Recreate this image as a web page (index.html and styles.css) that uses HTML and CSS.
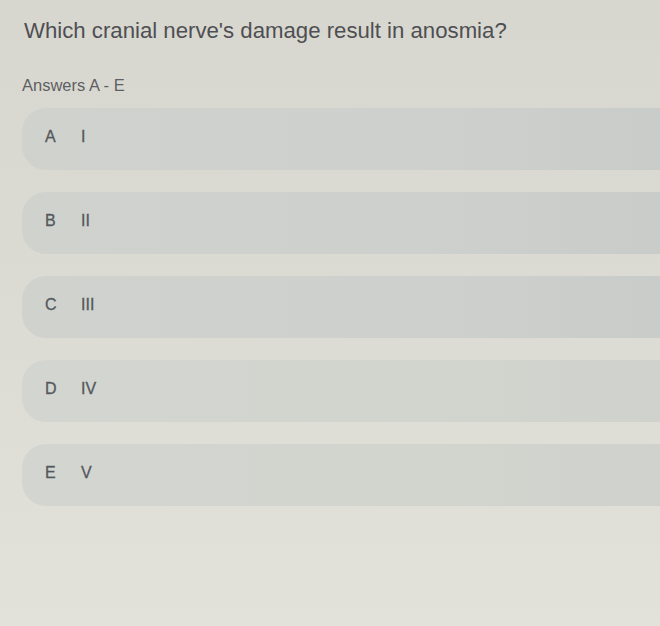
FILE: index.html
```html
<!DOCTYPE html>
<html>
<head>
<meta charset="utf-8">
<link rel="stylesheet" href="styles.css">
</head>
<body>
<main class="page">
  <h1 class="question">Which cranial nerve's damage result in anosmia?</h1>
  <p class="hint">Answers A - E</p>
  <ul class="options">
    <li class="option"><span class="key">A</span><span class="val">I</span></li>
    <li class="option"><span class="key">B</span><span class="val">II</span></li>
    <li class="option"><span class="key">C</span><span class="val">III</span></li>
    <li class="option"><span class="key">D</span><span class="val">IV</span></li>
    <li class="option"><span class="key">E</span><span class="val">V</span></li>
  </ul>
</main>
</body>
</html>
```
FILE: styles.css
```css
html, body {
  margin: 0;
  padding: 0;
  height: 100%;
  overflow: hidden;
}
body {
  background: linear-gradient(180deg, #d8d7cf 0%, #dcdbd3 45%, #e3e2da 100%);
  font-family: "Liberation Sans", Arial, sans-serif;
}
.page {
  padding: 18px 0 0 22px;
  overflow: hidden;
}
.question {
  margin: 0 0 0 2px;
  font-size: 22.2px;
  font-weight: normal;
  color: #4e4f53;
  line-height: 26px;
}
.hint {
  margin: 32px 0 0 0;
  font-size: 16.5px;
  color: #5d5f63;
  letter-spacing: 0;
  line-height: 18px;
}
.options {
  list-style: none;
  margin: 14px -40px 0 0;
  padding: 0;
  display: flex;
  flex-direction: column;
  gap: 22px;
}
.option {
  height: 62px;
  border-radius: 24px 0 0 24px;
  background: linear-gradient(90deg, #cfd2cd 0%, #cdd0cc 60%, #c8ccc9 100%);
  display: flex;
  align-items: flex-start;
  padding: 20px 0 0 23px;
  box-sizing: border-box;
  font-size: 16px;
  color: #55585c;
  -webkit-text-stroke: 0.3px #55585c;
}
.option:nth-child(4), .option:nth-child(5) {
  background: linear-gradient(90deg, #d3d5d0 0%, #d2d4ce 60%, #cfd1cc 100%);
}
.key {
  width: 36px;
}
```
